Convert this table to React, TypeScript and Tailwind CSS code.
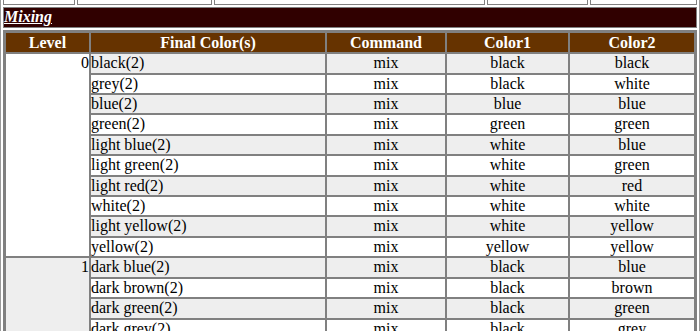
const level0 = [
  ['black(2)', 'mix', 'black', 'black'],
  ['grey(2)', 'mix', 'black', 'white'],
  ['blue(2)', 'mix', 'blue', 'blue'],
  ['green(2)', 'mix', 'green', 'green'],
  ['light blue(2)', 'mix', 'white', 'blue'],
  ['light green(2)', 'mix', 'white', 'green'],
  ['light red(2)', 'mix', 'white', 'red'],
  ['white(2)', 'mix', 'white', 'white'],
  ['light yellow(2)', 'mix', 'white', 'yellow'],
  ['yellow(2)', 'mix', 'yellow', 'yellow'],
];

const level1 = [
  ['dark blue(2)', 'mix', 'black', 'blue'],
  ['dark brown(2)', 'mix', 'black', 'brown'],
  ['dark green(2)', 'mix', 'black', 'green'],
  ['dark grey(2)', 'mix', 'black', 'grey'],
  ['dark red(2)', 'mix', 'black', 'red'],
  ['orange(2)', 'mix', 'red', 'yellow'],
];

const levels = [
  { level: 0, rows: level0, bg: 'bg-white' },
  { level: 1, rows: level1, bg: 'bg-[#eeeeee]' },
];

const cell = 'border border-[#808080] p-0 leading-[18.4px]';
const head = 'border border-[#808080] p-0 leading-[19.4px] text-center';

export default function App() {
  let rowIndex = 0;

  return (
    <div className="h-[331px] w-[700px] overflow-hidden bg-white font-['Liberation_Serif',serif] text-[16px] text-black">
      <table className="-mt-[18px] w-[700px] table-fixed border-separate border-spacing-[2px] border border-[#9a9a9a]">
        <colgroup>
          <col className="w-[72px]" />
          <col className="w-[135px]" />
          <col className="w-[271px]" />
          <col className="w-[101px]" />
          <col />
        </colgroup>
        <tbody>
          {/* row above, mostly scrolled out */}
          <tr>
            {[0, 1, 2, 3, 4].map((i) => (
              <td key={i} className={cell}>&nbsp;</td>
            ))}
          </tr>
          <tr>
            <td colSpan={5} className={`${cell} bg-[#300000] text-white font-bold italic underline`}>
              Mixing
            </td>
          </tr>
          <tr>
            <td colSpan={5} className={cell}>
              <table className="w-full table-fixed border-separate border-spacing-0 border border-[#808080]">
                <colgroup>
                  <col className="w-[85px]" />
                  <col className="w-[236px]" />
                  <col className="w-[120px]" />
                  <col className="w-[123px]" />
                  <col />
                </colgroup>
                <thead>
                  <tr className="bg-[#663300] text-white font-bold">
                    <th className={head}>Level</th>
                    <th className={head}>Final Color(s)</th>
                    <th className={head}>Command</th>
                    <th className={head}>Color1</th>
                    <th className={head}>Color2</th>
                  </tr>
                </thead>
                <tbody>
                  {levels.map((lv) =>
                    lv.rows.map((r, i) => {
                      const shade = rowIndex++ % 2 === 0 ? 'bg-[#eeeeee]' : 'bg-white';
                      return (
                        <tr key={`${lv.level}-${i}`}>
                          {i === 0 && (
                            <td rowSpan={lv.rows.length} className={`${cell} ${lv.bg} text-right align-top`}>
                              {lv.level}
                            </td>
                          )}
                          <td className={`${cell} ${shade} text-left whitespace-nowrap`}>{r[0]}</td>
                          <td className={`${cell} ${shade} text-center`}>{r[1]}</td>
                          <td className={`${cell} ${shade} text-center`}>{r[2]}</td>
                          <td className={`${cell} ${shade} text-center`}>{r[3]}</td>
                        </tr>
                      );
                    })
                  )}
                </tbody>
              </table>
            </td>
          </tr>
        </tbody>
      </table>
    </div>
  );
}
